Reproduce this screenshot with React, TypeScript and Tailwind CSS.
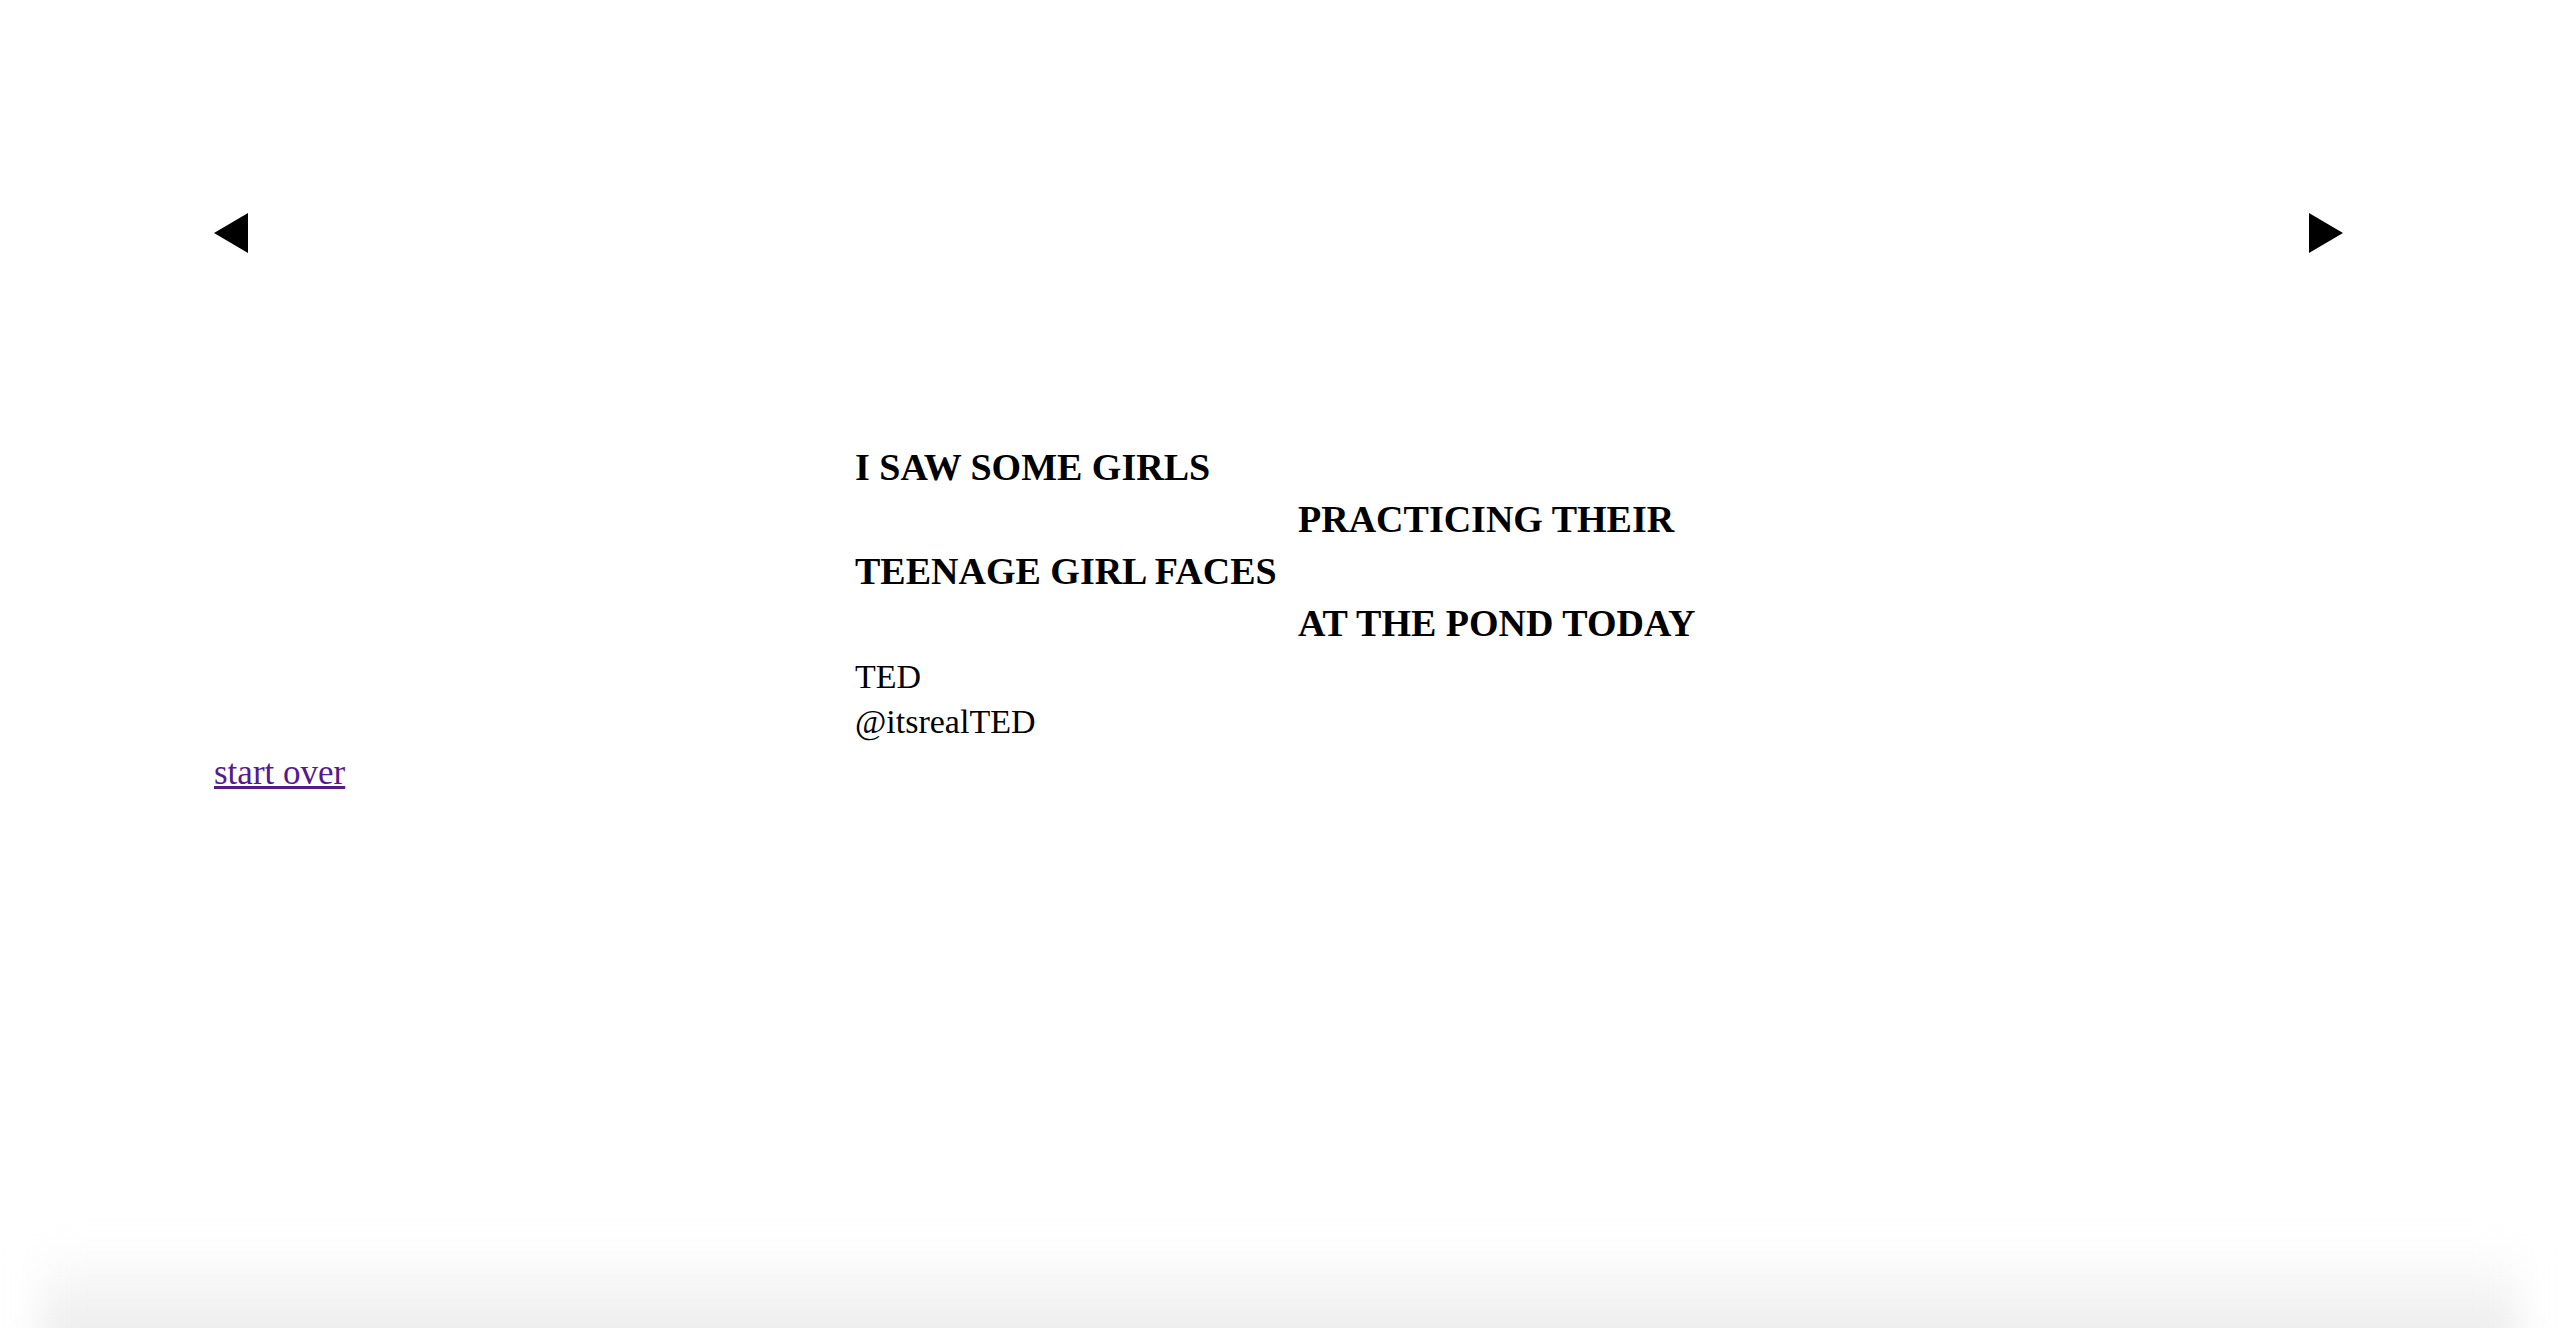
import React from 'react'

const lines: [string, string][] = [
    ['I SAW SOME GIRLS', ''],
    ['', 'PRACTICING THEIR'],
    ['TEENAGE GIRL FACES', ''],
    ['', 'AT THE POND TODAY'],
]

function Arrow({ dir }: { dir: 'left' | 'right' }) {
    return (
        <svg width="34" height="40" viewBox="0 0 34 40" className="block">
            {dir === 'left' ? <polygon points="34,0 34,40 0,20" fill="#000" /> : <polygon points="0,0 0,40 34,20" fill="#000" />}
        </svg>
    )
}

export default function App() {
    return (
        <div className="relative h-screen overflow-hidden bg-white text-black font-['Liberation_Serif',serif]">
            <div className="flex justify-between pl-[214px] pr-[217px] pt-[213px]">
                <a href="#"><Arrow dir="left" /></a>
                <a href="#"><Arrow dir="right" /></a>
            </div>

            <div className="pl-[214px] pt-[188px]">
                <div className="ml-[641px]">
                    <div className="grid grid-cols-[443px_auto] text-[38px] leading-[52px] font-bold">
                        {lines.map(([a, b], i) => (
                            <React.Fragment key={i}>
                                <div className="h-[52px] whitespace-nowrap">{a}</div>
                                <div className="h-[52px] whitespace-nowrap">{b}</div>
                            </React.Fragment>
                        ))}
                    </div>
                    <div className="mt-[5px] text-[34px] leading-[45px]">
                        <div>TED</div>
                        <div>@itsrealTED</div>
                    </div>
                </div>
                <div className="mt-[6px] text-[35px] leading-[45px]">
                    <a href="#" className="text-[#551a8b] underline">start over</a>
                </div>
            </div>

            <div className="pointer-events-none absolute inset-x-0 -bottom-[30px] h-[115px] px-[40px]">
                <div className="h-full bg-linear-to-b from-white to-[#e8e8e8] blur-[18px]" />
            </div>
        </div>
    )
}
